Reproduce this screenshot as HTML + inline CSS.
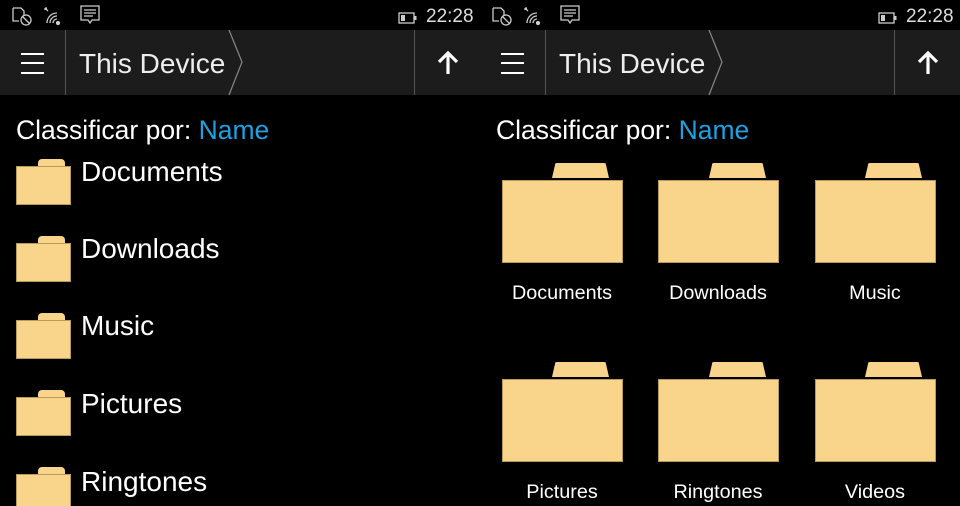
<!DOCTYPE html>
<html><head><meta charset="utf-8"><style>
*{margin:0;padding:0;box-sizing:border-box}
html,body{width:960px;height:506px;overflow:hidden}
body{background:#000;position:relative;font-family:"Liberation Sans",sans-serif;color:#fff}
.a{position:absolute;white-space:nowrap}
.bar{position:absolute;top:30px;height:65px;width:480px;background:#1c1c1c}
.sep{position:absolute;top:0;width:1px;height:65px;background:#555}
.ham{position:absolute;left:21px;width:23px;height:2px;background:#fff}
.sf{position:absolute;width:55px;height:39px;background:#f8d58a;border:1px solid #b89a5a}
.st{position:absolute;width:27px;height:8px;background:#f8d58a;border-radius:4px 4px 0 0}
.bf{position:absolute;width:121px;height:83px;background:#f8d58a;border:1px solid #b89a5a}
.bt{position:absolute;width:57px;height:15px;background:#f8d58a;border-radius:5px 5px 0 0;clip-path:polygon(6% 0,94% 0,100% 100%,0 100%)}
.lbl{position:absolute;font-size:19.8px;color:#fff;text-align:center;width:140px}
.lt{position:absolute;font-size:28px;left:81px}
.cl{position:absolute;font-size:26.5px;top:115px;white-space:nowrap}
</style></head><body>
<svg class="a" style="left:12px;top:5px" width="90" height="22" viewBox="0 0 90 22" fill="none" stroke="#ccc" stroke-width="1.3">
<path d="M1 3h8l3 3v5M1 3v13h6"/><circle cx="14" cy="15" r="5"/><path d="M10.5 11.5l7 7"/>
<path d="M33 3l3 3M33 3h2M33 3v2"/><path d="M35 18a10 10 0 0 1 10-10M38 18a7 7 0 0 1 7-7M41 18a4 4 0 0 1 4-4"/><circle cx="46" cy="18" r="1.5" fill="#ccc"/>
<path d="M69 1h18v14h-7l-2 3-2-3h-7z"/><path d="M72 5h12M72 8h12M72 11h9"/></svg>
<svg class="a" style="left:398px;top:12px" width="20" height="12"><rect x="1" y="1" width="15" height="10" fill="none" stroke="#ccc" stroke-width="1.3"/><rect x="3" y="3" width="4" height="6" fill="#ccc"/><rect x="16.5" y="4" width="2" height="4" fill="#ccc"/></svg>
<div class="a" style="left:426px;top:6px;font-size:19px;color:#ddd">22:28</div>
<svg class="a" style="left:492px;top:5px" width="90" height="22" viewBox="0 0 90 22" fill="none" stroke="#ccc" stroke-width="1.3">
<path d="M1 3h8l3 3v5M1 3v13h6"/><circle cx="14" cy="15" r="5"/><path d="M10.5 11.5l7 7"/>
<path d="M33 3l3 3M33 3h2M33 3v2"/><path d="M35 18a10 10 0 0 1 10-10M38 18a7 7 0 0 1 7-7M41 18a4 4 0 0 1 4-4"/><circle cx="46" cy="18" r="1.5" fill="#ccc"/>
<path d="M69 1h18v14h-7l-2 3-2-3h-7z"/><path d="M72 5h12M72 8h12M72 11h9"/></svg>
<svg class="a" style="left:878px;top:12px" width="20" height="12"><rect x="1" y="1" width="15" height="10" fill="none" stroke="#ccc" stroke-width="1.3"/><rect x="3" y="3" width="4" height="6" fill="#ccc"/><rect x="16.5" y="4" width="2" height="4" fill="#ccc"/></svg>
<div class="a" style="left:906px;top:6px;font-size:19px;color:#ddd">22:28</div>

<div class="bar" style="left:0">
<div class="ham" style="top:23px"></div><div class="ham" style="top:32px"></div><div class="ham" style="top:42px"></div>
<div class="sep" style="left:65px"></div>
<div class="a" style="left:79px;top:18px;font-size:28px;color:#eee">This Device</div>
<svg class="a" style="left:228px;top:0" width="16" height="65"><path d="M1 0L14 32L1 65" fill="none" stroke="#888" stroke-width="1.2"/></svg>
<div class="sep" style="left:414px"></div>
<svg class="a" style="left:437px;top:20px" width="22" height="26"><path d="M11 24V3M2 12l9-9 9 9" fill="none" stroke="#fff" stroke-width="3.2"/></svg>
</div>
<div class="bar" style="left:480px">
<div class="ham" style="top:23px"></div><div class="ham" style="top:32px"></div><div class="ham" style="top:42px"></div>
<div class="sep" style="left:65px"></div>
<div class="a" style="left:79px;top:18px;font-size:28px;color:#eee">This Device</div>
<svg class="a" style="left:228px;top:0" width="16" height="65"><path d="M1 0L14 32L1 65" fill="none" stroke="#888" stroke-width="1.2"/></svg>
<div class="sep" style="left:414px"></div>
<svg class="a" style="left:437px;top:20px" width="22" height="26"><path d="M11 24V3M2 12l9-9 9 9" fill="none" stroke="#fff" stroke-width="3.2"/></svg>
</div>

<div class="cl" style="left:16px">Classificar por: <span style="color:#1ba1e2">Name</span></div>
<div class="cl" style="left:496px">Classificar por: <span style="color:#1ba1e2">Name</span></div>

<div class="st" style="left:38px;top:159px"></div><div class="sf" style="left:16px;top:166px"></div><div class="lt" style="top:156px">Documents</div>
<div class="st" style="left:38px;top:236px"></div><div class="sf" style="left:16px;top:243px"></div><div class="lt" style="top:233px">Downloads</div>
<div class="st" style="left:38px;top:313px"></div><div class="sf" style="left:16px;top:320px"></div><div class="lt" style="top:310px">Music</div>
<div class="st" style="left:38px;top:390px"></div><div class="sf" style="left:16px;top:397px"></div><div class="lt" style="top:388px">Pictures</div>
<div class="st" style="left:38px;top:467px"></div><div class="sf" style="left:16px;top:474px"></div><div class="lt" style="top:466px">Ringtones</div>

<div class="bt" style="left:552px;top:163px"></div><div class="bf" style="left:502px;top:180px"></div><div class="lbl" style="left:492px;top:282px">Documents</div>
<div class="bt" style="left:709px;top:163px"></div><div class="bf" style="left:658px;top:180px"></div><div class="lbl" style="left:648px;top:282px">Downloads</div>
<div class="bt" style="left:865px;top:163px"></div><div class="bf" style="left:815px;top:180px"></div><div class="lbl" style="left:805px;top:282px">Music</div>
<div class="bt" style="left:552px;top:362px"></div><div class="bf" style="left:502px;top:379px"></div><div class="lbl" style="left:492px;top:481px">Pictures</div>
<div class="bt" style="left:709px;top:362px"></div><div class="bf" style="left:658px;top:379px"></div><div class="lbl" style="left:648px;top:481px">Ringtones</div>
<div class="bt" style="left:865px;top:362px"></div><div class="bf" style="left:815px;top:379px"></div><div class="lbl" style="left:805px;top:481px">Videos</div>
</body></html>
